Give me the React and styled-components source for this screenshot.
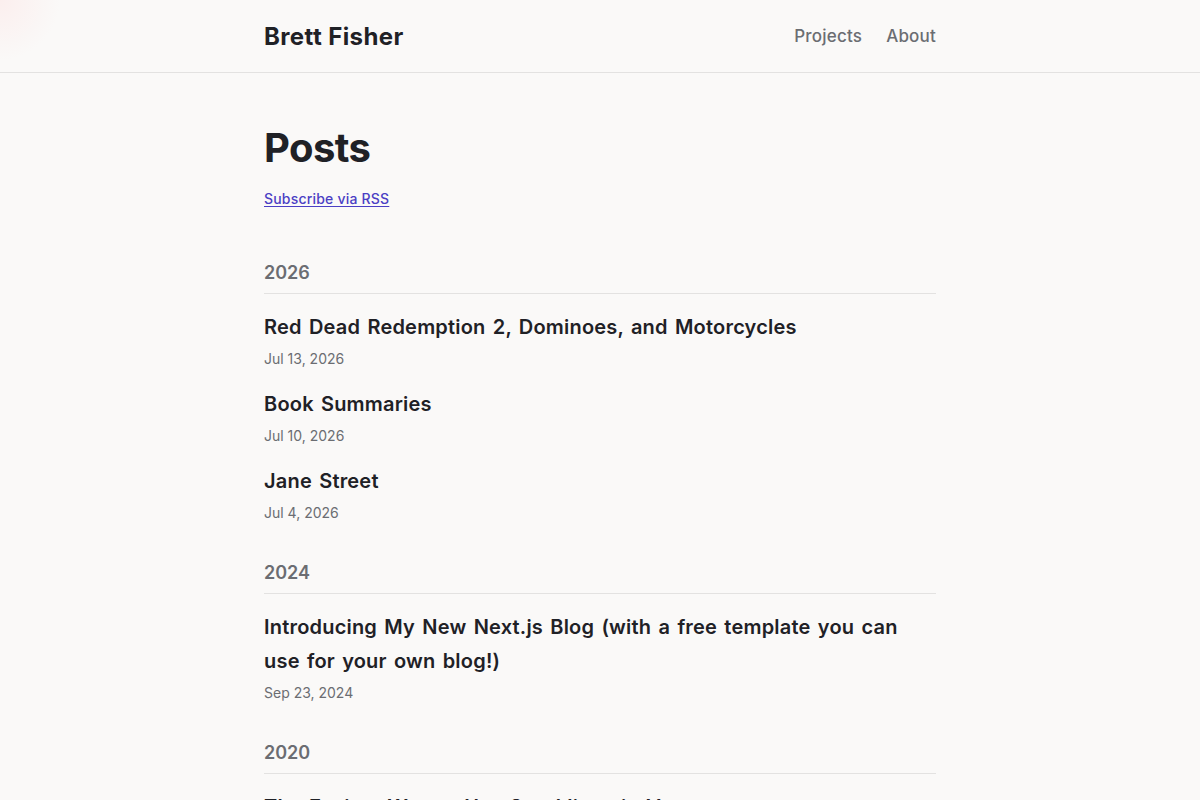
import React from 'react';
import styled, { createGlobalStyle } from 'styled-components';

const GlobalStyle = createGlobalStyle`
  html, body {
    margin: 0;
    padding: 0;
    background: #faf9f8;
  }
  body {
    font-family: Inter, "Noto Sans", sans-serif;
    color: #1f2126;
    background:
      radial-gradient(circle at 0 0, rgba(255, 214, 214, 0.3), rgba(255, 214, 214, 0) 60px),
      #faf9f8;
    min-height: 800px;
  }
`;

const Header = styled.header`
  height: 72px;
  border-bottom: 1px solid #e3e2e1;
`;

const Container = styled.div`
  max-width: 672px;
  margin: 0 auto;
`;

const HeaderInner = styled(Container)`
  height: 100%;
  display: flex;
  align-items: center;
  justify-content: space-between;
`;

const Brand = styled.a`
  font-size: 24px;
  font-weight: 700;
  color: #1f2126;
  text-decoration: none;
  letter-spacing: 0.4px;
`;

const Nav = styled.nav`
  display: flex;
  gap: 24px;
`;

const NavLink = styled.a`
  font-size: 17px;
  font-weight: 500;
  color: #6b6d72;
  text-decoration: none;
  letter-spacing: 0.2px;
`;

const Main = styled(Container)`
  padding-top: 51px;
  padding-bottom: 40px;
`;

const Title = styled.h1`
  margin: 0;
  font-size: 40px;
  line-height: 48px;
  font-weight: 700;
  letter-spacing: -0.6px;
`;

const RssLink = styled.a`
  display: inline-block;
  margin-top: 17px;
  font-size: 14px;
  line-height: 20px;
  font-weight: 500;
  color: #4b3fc4;
  letter-spacing: 0.2px;
  text-decoration: underline;
  text-underline-offset: 2px;
`;

const YearSection = styled.section`
  margin-top: ${p => (p.$first ? '50px' : '36px')};
`;

const YearHeading = styled.h2`
  margin: 0 0 16px;
  padding-bottom: 6px;
  font-size: 18px;
  line-height: 28px;
  font-weight: 600;
  color: #6b6d72;
  border-bottom: 1px solid #e3e2e1;
`;

const PostList = styled.ul`
  list-style: none;
  margin: 0;
  padding: 0;
`;

const Post = styled.li`
  margin-bottom: 18px;
`;

const PostTitle = styled.a`
  display: block;
  font-size: 20px;
  line-height: 34px;
  font-weight: 600;
  color: #1f2126;
  text-decoration: none;
  letter-spacing: 0.2px;
  word-spacing: 2px;
`;

const PostDate = styled.time`
  display: block;
  margin-top: 5px;
  font-size: 14px;
  line-height: 20px;
  color: #6b6d72;
`;

const years = [
  {
    year: '2026',
    posts: [
      { title: 'Red Dead Redemption 2, Dominoes, and Motorcycles', date: 'Jul 13, 2026' },
      { title: 'Book Summaries', date: 'Jul 10, 2026' },
      { title: 'Jane Street', date: 'Jul 4, 2026' },
    ],
  },
  {
    year: '2024',
    posts: [
      {
        title: 'Introducing My New Next.js Blog (with a free template you can use for your own blog!)',
        date: 'Sep 23, 2024',
      },
    ],
  },
  {
    year: '2020',
    posts: [
      { title: 'The Easiest Way to Use Sparklines in Vue', date: 'Mar 2, 2020' },
    ],
  },
];

export default function App() {
  return (
    <>
      <GlobalStyle />
      <Header>
        <HeaderInner>
          <Brand href="#">Brett Fisher</Brand>
          <Nav>
            <NavLink href="#">Projects</NavLink>
            <NavLink href="#">About</NavLink>
          </Nav>
        </HeaderInner>
      </Header>
      <Main>
        <Title>Posts</Title>
        <RssLink href="#">Subscribe via RSS</RssLink>
        {years.map((group, i) => (
          <YearSection key={group.year} $first={i === 0}>
            <YearHeading>{group.year}</YearHeading>
            <PostList>
              {group.posts.map(post => (
                <Post key={post.title}>
                  <PostTitle href="#">{post.title}</PostTitle>
                  <PostDate>{post.date}</PostDate>
                </Post>
              ))}
            </PostList>
          </YearSection>
        ))}
      </Main>
    </>
  );
}
